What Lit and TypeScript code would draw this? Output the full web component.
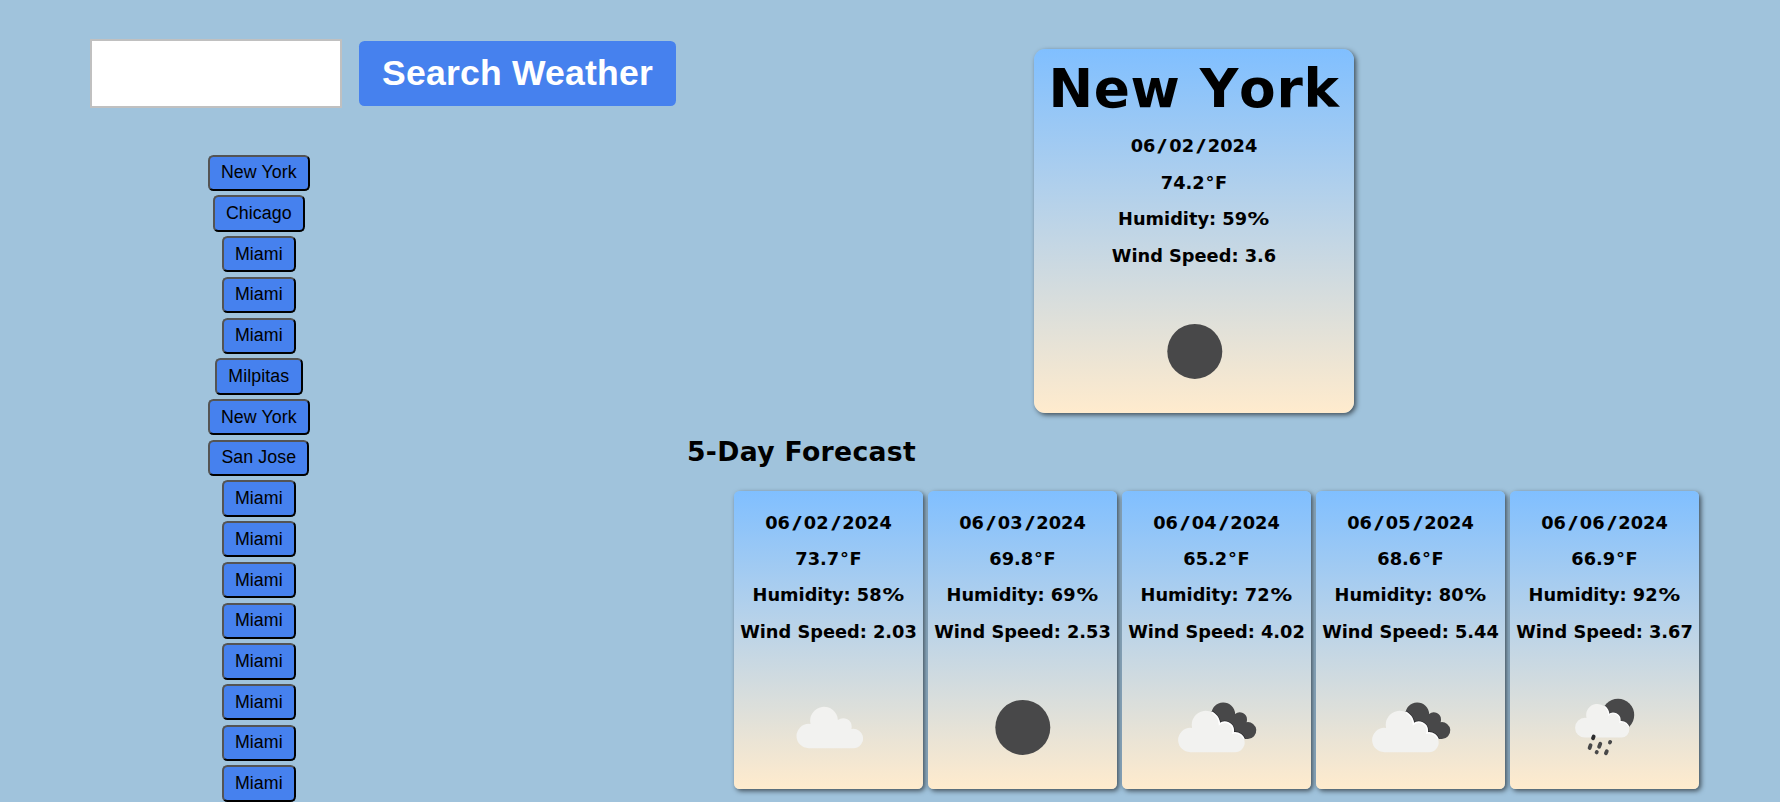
import { LitElement, html, svg, css } from "lit";
import { customElement, property } from "lit/decorators.js";

type Sky = "clear" | "cloud" | "broken" | "rain";

interface Reading {
  date: string;
  temp: string;
  humidity: number;
  wind: string;
  sky: Sky;
}

const CLOUD =
  "M35.7 76.2A12.2 12.2 0 0 1 35.7 51.8Q36.6 51.8 37.5 52A13.9 13.9 0 1 1 64.9 48.1A8.5 8.5 0 0 1 78.7 54.7Q78.7 56 78.4 57A9.7 9.7 0 1 1 80.3 76.2Z";
const DARK_CLOUD =
  "M50.5 42.5A11.8 11.8 0 0 1 74.1 41.9A7.3 7.3 0 0 1 86 47.8Q86 49.2 85.6 50.2A8.4 8.4 0 1 1 86.9 66.9L60 66.9Z";

@customElement("sky-icon")
class SkyIcon extends LitElement {
  @property() sky: Sky = "clear";

  static styles = css`
    :host { display: block; width: 111px; height: 111px; }
    .art { display: block; width: 111px; height: 111px; }
    .dark { fill: #484849; }
    .cloud { fill: #f2f2f0; }
    .shade { fill: none; stroke: #2b2b2d; stroke-width: 3; }
    .rim { fill: none; stroke: #fff; stroke-width: 1.6; }
    .drop { fill: none; stroke: #484849; stroke-width: 3.8; stroke-linecap: round; }
    .drop.first { stroke: #2b2b2d; }
  `;

  private shapes() {
    switch (this.sky) {
      case "clear":
        return svg`<circle class="dark" cx="55.8" cy="55.4" r="27.5"/>`;
      case "cloud":
        return svg`<path class="cloud" d=${CLOUD}/>`;
      case "broken":
        return svg`
          <clipPath id="back"><path d=${DARK_CLOUD}/></clipPath>
          <path class="dark" d=${DARK_CLOUD}/>
          <g clip-path="url(#back)">
            <path class="shade" transform="translate(-6.4 4)" d=${CLOUD}/>
          </g>
          <path class="cloud" transform="translate(-6.4 4)" d=${CLOUD}/>
          <g clip-path="url(#back)">
            <path class="rim" transform="translate(-6.4 4)" d=${CLOUD}/>
          </g>`;
      case "rain":
        return svg`
          <clipPath id="moon"><circle cx="69" cy="43" r="16.2"/></clipPath>
          <circle class="dark" cx="69" cy="43" r="16.2"/>
          <path class="drop" d="M41.6 73.2L40.6 76M51.3 71.8L50.1 74.8M61.2 69.9L60.9 70.5M47.8 80L47.6 80.4M57.8 79.2L56.9 81.3"/>
          <path class="cloud" transform="translate(6.9 3.5) scale(.815)" d=${CLOUD}/>
          <g clip-path="url(#moon)">
            <path class="rim" transform="translate(6.9 3.5) scale(.815)" d=${CLOUD}/>
          </g>
          <path class="drop first" d="M44.7 64.4L44 66.2"/>`;
    }
  }

  render() {
    return html`<svg class="art" viewBox="0 0 111 111">${this.shapes()}</svg>`;
  }
}

@customElement("weather-card")
class WeatherCard extends LitElement {
  @property() city = "";
  @property({ attribute: false }) reading!: Reading;

  static styles = css`
    :host { display: block; }
    .card {
      box-sizing: border-box;
      display: flex;
      flex-direction: column;
      align-items: center;
      width: 189px;
      height: 298px;
      padding: 13.6px 0 6.3px;
      border-radius: 5.5px;
      background: linear-gradient(#80bfff, #ffebcd);
      box-shadow: 2px 2px 5px rgba(0, 0, 0, 0.6);
    }
    .card.current {
      width: 320px;
      height: 364px;
      padding-top: 1px;
      border-radius: 11px;
    }
    .city {
      margin: 0;
      font-size: 53.33px;
      font-kerning: none;
      letter-spacing: 0.7px;
      line-height: 78.4px;
      white-space: nowrap;
    }
    .line {
      margin: 0;
      font-size: 17.78px;
      font-weight: bold;
      line-height: 36.4px;
      white-space: nowrap;
    }
    .slash,
    .percent { display: inline-block; text-align: center; }
    .slash { width: 0.78em; transform: scaleX(1.45); }
    .percent { width: 1.29em; transform: scaleX(1.22); }
    .degree { padding: 0 0.04em; }
    .icon { margin-top: auto; }
  `;

  render() {
    const r = this.reading;
    const [month, day, year] = r.date.split("/");
    const slash = html`<span class="slash">/</span>`;
    return html`<div class="card ${this.city ? "current" : ""}">
      ${this.city ? html`<h1 class="city">${this.city}</h1>` : ""}
      <p class="line">${month}${slash}${day}${slash}${year}</p>
      <p class="line">${r.temp}<span class="degree">°</span>F</p>
      <p class="line">Humidity: ${r.humidity}<span class="percent">%</span></p>
      <p class="line">Wind Speed: ${r.wind}</p>
      <sky-icon class="icon" .sky=${r.sky}></sky-icon>
    </div>`;
  }
}

@customElement("app-root")
class AppRoot extends LitElement {
  private history = [
    "New York", "Chicago", "Miami", "Miami", "Miami", "Milpitas", "New York", "San Jose",
    "Miami", "Miami", "Miami", "Miami", "Miami", "Miami", "Miami", "Miami",
  ];

  private current: Reading = { date: "06/02/2024", temp: "74.2", humidity: 59, wind: "3.6", sky: "clear" };

  private forecast: Reading[] = [
    { date: "06/02/2024", temp: "73.7", humidity: 58, wind: "2.03", sky: "cloud" },
    { date: "06/03/2024", temp: "69.8", humidity: 69, wind: "2.53", sky: "clear" },
    { date: "06/04/2024", temp: "65.2", humidity: 72, wind: "4.02", sky: "broken" },
    { date: "06/05/2024", temp: "68.6", humidity: 80, wind: "5.44", sky: "broken" },
    { date: "06/06/2024", temp: "66.9", humidity: 92, wind: "3.67", sky: "rain" },
  ];

  static styles = css`
    :host {
      box-sizing: border-box;
      display: flex;
      align-items: flex-start;
      height: 802px;
      overflow: hidden;
      background: #a0c3dc;
      color: #000;
      font-family: Verdana, "DejaVu Sans", sans-serif;
    }
    .side {
      box-sizing: border-box;
      flex: none;
      width: 687px;
      padding: 39px 0 0 90px;
    }
    .search { display: flex; align-items: center; gap: 17px; }
    .field {
      box-sizing: border-box;
      width: 252px;
      height: 69px;
      margin: 0;
      border: 2px solid #c0c0c0;
      border-radius: 0;
      background: #fff;
      font: 35.56px "Liberation Sans", Arial, sans-serif;
      outline: none;
    }
    .submit {
      box-sizing: border-box;
      width: 317px;
      height: 65px;
      padding: 0 0 1px;
      border: 0;
      border-radius: 5.5px;
      background: #4681ee;
      color: #fff;
      font: bold 35.56px "Liberation Sans", Arial, sans-serif;
      letter-spacing: 0.2px;
      white-space: nowrap;
    }
    .history {
      display: flex;
      flex-direction: column;
      align-items: center;
      gap: 4.43px;
      width: 337.6px;
      padding-top: 46.7px;
    }
    .past {
      box-sizing: border-box;
      flex: none;
      height: 36.3px;
      padding: 0 11.3px;
      border: 2px outset #000;
      border-radius: 5.5px;
      background: #4681ee;
      color: #000;
      font: 17.78px "Liberation Sans", Arial, sans-serif;
      letter-spacing: 0.08px;
    }
    .main {
      box-sizing: border-box;
      flex: none;
      display: flex;
      flex-direction: column;
      width: 1014px;
      padding-top: 49px;
    }
    .today { align-self: center; }
    .heading {
      margin: 0;
      font-size: 26.67px;
      line-height: 78px;
      letter-spacing: 0.32px;
    }
    .days { display: flex; gap: 5px; padding-left: 47px; }
  `;

  render() {
    return html`
      <section class="side">
        <div class="search">
          <input class="field" type="text" aria-label="City" />
          <button class="submit">Search Weather</button>
        </div>
        <div class="history">
          ${this.history.map((c) => html`<button class="past">${c}</button>`)}
        </div>
      </section>
      <section class="main">
        <weather-card class="today" city="New York" .reading=${this.current}></weather-card>
        <h2 class="heading">5-Day Forecast</h2>
        <div class="days">
          ${this.forecast.map((d) => html`<weather-card .reading=${d}></weather-card>`)}
        </div>
      </section>
    `;
  }
}
